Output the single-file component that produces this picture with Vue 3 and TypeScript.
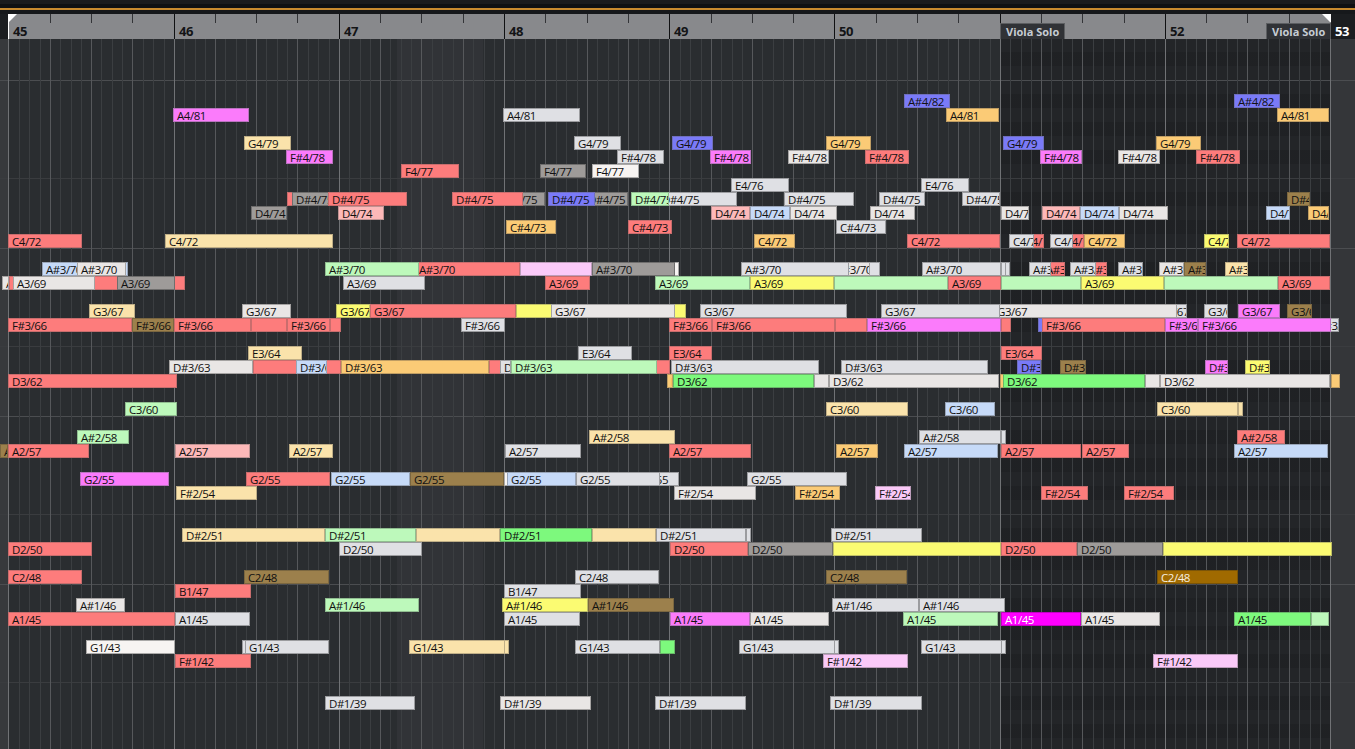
<script setup lang="ts">
type Spec = [number, number, string, number?]
type Row = [string, number, Spec[]]

const barStarts = [8, 174, 339, 504, 669, 834, 1000, 1165, 1330]
const beatStarts = [
  8, 50, 91, 132, 174, 215, 256, 297, 339, 380, 421, 463, 504, 545, 587, 628, 669, 711, 752, 793,
  834, 876, 917, 958, 1000, 1041, 1082, 1124, 1165, 1206, 1247, 1289, 1330,
]

const bars = barStarts.slice(0, -1).map((start, i) => {
  const beats = beatStarts.slice(i * 4, i * 4 + 5)
  return {
    num: 45 + i,
    width: barStarts[i + 1] - start,
    beats: beats.slice(0, 4).map((b, j) => beats[j + 1] - b),
    tagged: i === 6,
  }
})

const lines: { x: number; kind: string }[] = []
beatStarts.slice(0, -1).forEach((b, i) => {
  const next = beatStarts[i + 1]
  lines.push({ x: b, kind: i % 4 === 0 ? 'major' : 'beat' })
  for (let k = 1; k < 4; k++) lines.push({ x: Math.round(b + ((next - b) * k) / 4), kind: 'six' })
})
lines.push({ x: 1330, kind: 'major' })

const sharps = [1, 3, 6, 8, 10]
const pitchRows = Array.from({ length: 51 }, (_, i) => {
  const p = 86 - i
  const pc = p % 12
  return { p, sharp: sharps.includes(pc), line: pc === 11 ? 'octave' : pc === 4 ? 'fourth' : '' }
})

const data: Row[] = [
  ['A#4/82', 82, [[904, 950, 'u'], [1234, 1280, 'u']]],
  ['A4/81', 81, [[173, 249, 'm'], [503, 580, 'g'], [946, 999, 'o'], [1277, 1329, 'o']]],
  ['G4/79', 79, [[244, 291, 'c'], [574, 621, 'g'], [672, 713, 'u'], [826, 871, 'o'], [1003, 1044, 'u'], [1156, 1201, 'o']]],
  ['F#4/78', 78, [[286, 333, 'm'], [617, 664, 'g'], [710, 751, 'm'], [788, 829, 'w'], [865, 909, 'r'], [1040, 1082, 'm'], [1118, 1160, 'w'], [1196, 1240, 'r']]],
  ['F4/77', 77, [[401, 459, 'r'], [540, 586, 'd'], [592, 639, 'h']]],
  ['E4/76', 76, [[731, 789, 'g'], [921, 969, 'g']]],
  ['D#4/75', 75, [[287, 293, 'r', 0], [292, 329, 'd'], [328, 407, 'r'], [496, 545, 'd'], [452, 523, 'r'], [584, 628, 'd'], [548, 595, 'u'], [658, 737, 'g'], [631, 669, 'l'], [784, 854, 'g'], [879, 925, 'g'], [962, 1000, 'g'], [1287, 1310, 'b']]],
  ['D4/74', 74, [[251, 287, 'd'], [338, 384, 'q'], [711, 750, 'q'], [750, 790, 's'], [790, 837, 'w'], [870, 915, 'w'], [1001, 1029, 'w'], [1042, 1080, 'q'], [1080, 1119, 's'], [1119, 1168, 'w'], [1266, 1290, 's'], [1308, 1329, 'o']]],
  ['C#4/73', 73, [[506, 556, 'o'], [628, 672, 'r'], [836, 886, 'g']]],
  ['C4/72', 72, [[8, 82, 'r'], [165, 333, 'c'], [754, 795, 'o'], [907, 1000, 'r'], [1021, 1044, 'r'], [1009, 1034, 'g'], [1061, 1084, 'r'], [1050, 1073, 'g'], [1084, 1125, 'o'], [1204, 1229, 'y'], [1237, 1330, 'r']]],
  ['A#3/70', 70, [[42, 128, 's'], [77, 126, 'w'], [415, 520, 'r'], [325, 419, 'l'], [520, 592, 'p', 0], [592, 679, 'h', 0], [592, 675, 'd'], [860, 880, 'g', 0], [832, 870, 'w'], [741, 849, 'g'], [922, 1001, 'g'], [1001, 1006, 'g', 0], [1005, 1009, 'g', 0], [1042, 1065, 'r'], [1029, 1051, 'g'], [1085, 1107, 'r'], [1070, 1096, 'g'], [1118, 1143, 'g'], [1159, 1184, 'w'], [1184, 1206, 'b'], [1225, 1248, 'c']]],
  ['A3/69', 69, [[2, 9, 'w'], [9, 185, 'r', 0], [13, 95, 'w'], [117, 175, 'd'], [343, 425, 'g'], [545, 590, 'r'], [655, 750, 'l'], [750, 834, 'y'], [834, 948, 'l', 0], [948, 1001, 'r'], [1001, 1081, 'l', 0], [1081, 1164, 'y'], [1164, 1278, 'l', 0], [1278, 1330, 'r']]],
  ['G3/67', 67, [[89, 135, 'c'], [242, 291, 'w'], [336, 370, 'y'], [370, 516, 'r'], [516, 686, 'y', 0], [551, 675, 'w'], [700, 847, 'g'], [1155, 1187, 'g'], [993, 1177, 'w'], [881, 1000, 'g'], [1204, 1228, 'g'], [1238, 1280, 'm'], [1287, 1312, 'b']]],
  ['F#3/66', 66, [[8, 132, 'r'], [132, 174, 'b'], [174, 251, 'r'], [251, 287, 'r', 0], [287, 330, 'r'], [330, 341, 'r', 0], [461, 505, 'g'], [669, 712, 'r'], [712, 835, 'r'], [835, 867, 'r', 0], [867, 1001, 'm'], [1001, 1011, 'r', 0], [1038, 1042, 'u', 0], [1042, 1165, 'r'], [1315, 1339, 'g'], [1165, 1198, 'm'], [1198, 1331, 'm']]],
  ['E3/64', 64, [[248, 302, 'c'], [578, 632, 'g'], [669, 712, 'r'], [1001, 1042, 'r']]],
  ['D#3/63', 63, [[253, 341, 'r', 0], [169, 253, 'w'], [296, 327, 's'], [341, 489, 'o'], [489, 670, 'r', 0], [500, 511, 'g'], [511, 657, 'l'], [671, 819, 'g'], [841, 988, 'g'], [1017, 1041, 'u'], [1060, 1086, 'b'], [1205, 1228, 'm'], [1245, 1270, 'y']]],
  ['D3/62', 62, [[8, 177, 'r'], [667, 673, 'o'], [673, 814, 'n'], [814, 829, 'w', 0], [829, 999, 'w'], [1000, 1003, 'o', 0], [1003, 1145, 'n'], [1145, 1160, 'w', 0], [1160, 1330, 'w'], [1331, 1340, 'o', 0]]],
  ['C3/60', 60, [[125, 177, 'l'], [826, 908, 'c'], [945, 995, 's'], [1157, 1238, 'c'], [1238, 1242, 'c', 0]]],
  ['A#2/58', 58, [[77, 129, 'l'], [589, 675, 'c'], [919, 1001, 'g'], [1001, 1005, 'g', 0], [1237, 1285, 'r']]],
  ['A2/57', 57, [[0, 8, 'b'], [8, 89, 'r'], [175, 250, 'q'], [289, 333, 'c'], [505, 581, 'g'], [669, 751, 'r'], [836, 878, 'o'], [904, 998, 's'], [1001, 1081, 'r'], [1082, 1129, 'r'], [1234, 1328, 's']]],
  ['G2/55', 55, [[80, 169, 'm'], [246, 330, 'r'], [331, 410, 's'], [410, 504, 'b'], [504, 507, 'h', 0], [507, 576, 's'], [634, 679, 'g'], [576, 660, 'g'], [747, 847, 'g']]],
  ['F#2/54', 54, [[176, 257, 'c'], [674, 756, 'w'], [795, 840, 'o'], [875, 911, 'p'], [1041, 1088, 'r'], [1124, 1174, 'r']]],
  ['D#2/51', 51, [[182, 325, 'c'], [325, 416, 'l'], [416, 500, 'c', 0], [500, 592, 'n'], [592, 656, 'c', 0], [746, 750, 'g', 0], [656, 746, 'g'], [831, 922, 'g']]],
  ['D2/50', 50, [[8, 92, 'r'], [339, 422, 'g'], [670, 748, 'r'], [748, 833, 'd'], [833, 1001, 'y', 0], [1001, 1077, 'r'], [1077, 1163, 'd'], [1163, 1332, 'y', 0]]],
  ['C2/48', 48, [[8, 82, 'r'], [244, 329, 'b'], [575, 659, 'g'], [826, 907, 'b'], [1157, 1238, 'B']]],
  ['B1/47', 47, [[175, 251, 'r'], [504, 581, 'g']]],
  ['A#1/46', 46, [[76, 125, 'w'], [325, 419, 'l'], [502, 588, 'y'], [588, 674, 'b'], [832, 919, 'g'], [919, 1005, 'g']]],
  ['A1/45', 45, [[8, 175, 'r'], [175, 250, 'g'], [504, 580, 'g'], [670, 750, 'm'], [750, 829, 'w'], [903, 998, 'l'], [1001, 1081, 'M'], [1081, 1160, 'w'], [1234, 1311, 'n'], [1311, 1329, 'l', 0]]],
  ['G1/43', 43, [[86, 175, 'h'], [242, 246, 'g', 0], [245, 329, 'g'], [504, 507, 'c', 0], [409, 505, 'c'], [575, 660, 'g'], [660, 675, 'n', 0], [834, 838, 'g', 0], [739, 835, 'g'], [1001, 1005, 'g', 0], [921, 1002, 'g']]],
  ['F#1/42', 42, [[175, 251, 'r'], [823, 908, 'p'], [1153, 1238, 'p']]],
  ['D#1/39', 39, [[325, 415, 'g'], [500, 591, 'w'], [655, 746, 'g'], [830, 922, 'g']]],
]

const notes = data.flatMap(([label, pitch, specs]) =>
  specs.map(([x1, x2, color, show]) => ({
    label: show === 0 ? '' : label,
    color,
    style: {
      left: `${x1}px`,
      width: `${x2 - x1}px`,
      top: `${108 + (81 - pitch) * 14 - 39}px`,
    },
  })),
)
</script>

<template>
  <div class="app">
    <div class="top">
      <div class="top-a"></div>
      <div class="top-b"></div>
      <div class="top-line"></div>
      <div class="top-c"></div>
    </div>
    <div class="ruler">
      <div class="gutter"></div>
      <div v-for="bar in bars" :key="bar.num" class="bar" :style="{ width: bar.width + 'px' }">
        <div class="ticks">
          <div v-for="(w, i) in bar.beats" :key="i" class="tick" :style="{ width: w + 'px' }"></div>
        </div>
        <div class="num">{{ bar.num }}</div>
        <div v-if="bar.tagged" class="tag">Viola Solo</div>
      </div>
      <div class="end"><span class="end-num">53</span></div>
      <div class="tag tag-end">Viola Solo</div>
      <svg class="corner corner-l" width="9" height="9" viewBox="0 0 9 9"><polygon points="0,0 9,0 0,9" fill="#fff" /></svg>
      <svg class="corner corner-r" width="9" height="9" viewBox="0 0 9 9"><polygon points="0,0 9,0 9,9" fill="#fff" /></svg>
    </div>
    <div class="canvas">
      <div class="zones">
        <div class="zone zone-margin"></div>
        <div class="zone zone-a"></div>
        <div class="zone zone-light"></div>
        <div class="zone zone-b"></div>
        <div class="zone zone-dark"></div>
        <div class="zone zone-right"></div>
      </div>
      <div class="rows">
        <div
          v-for="row in pitchRows"
          :key="row.p"
          class="row"
          :class="[row.line, { sharp: row.sharp }]"
        ></div>
      </div>
      <div class="grid">
        <div
          v-for="line in lines"
          :key="line.x"
          class="vline"
          :class="line.kind"
          :style="{ left: line.x + 'px' }"
        ></div>
      </div>
      <div
        v-for="(note, i) in notes"
        :key="i"
        class="note"
        :class="'c-' + note.color"
        :style="note.style"
      >{{ note.label }}</div>
    </div>
  </div>
</template>

<style>
html,
body {
  margin: 0;
  background: #2a2d30;
  overflow: hidden;
}
</style>

<style scoped>
.app {
  width: 1355px;
  height: 749px;
  display: flex;
  flex-direction: column;
  overflow: hidden;
  font-family: "Open Sans", "Liberation Sans", sans-serif;
}
.top {
  height: 14px;
  flex: none;
  display: flex;
  flex-direction: column;
}
.top-a { height: 4px; background: #1a1b1d; }
.top-b { height: 4px; background: #0f1012; }
.top-line { height: 2px; background: #c88a2e; }
.top-c { height: 4px; background: #16181b; }

.ruler {
  height: 25px;
  flex: none;
  display: flex;
  position: relative;
  background: #88898c;
}
.gutter { width: 8px; flex: none; background: #1b1d20; }
.bar {
  flex: none;
  position: relative;
  border-left: 1px solid #101113;
  box-sizing: border-box;
}
.gutter + .bar { border-left-color: #fff; }
.ticks { display: flex; height: 9px; margin-left: -1px; }
.tick {
  flex: none;
  box-sizing: border-box;
  border-left: 1px solid #333437;
}
.tick:first-child { border-left-color: transparent; }
.num {
  margin: 0 0 0 4px;
  font-size: 13px;
  font-weight: 700;
  letter-spacing: -0.4px;
  line-height: 16px;
  color: #131416;
}
.end {
  flex: 1;
  background: #1b1d20;
  padding-left: 5px;
  font-size: 13px;
  font-weight: 700;
  letter-spacing: -0.4px;
  line-height: 16px;
  color: #fff;
}
.end-num { display: block; margin-top: 9px; }
.tag {
  position: absolute;
  left: -1px;
  top: 9px;
  width: 65px;
  height: 16px;
  box-sizing: border-box;
  background: #303236;
  border: 1px solid #5c5e61;
  border-bottom: 0;
  padding-left: 5px;
  font-size: 11px;
  font-weight: 700;
  line-height: 15px;
  color: #c6ccd3;
  white-space: nowrap;
  overflow: hidden;
}
.tag-end { left: 1266px; }
.corner { position: absolute; top: 0; }
.corner-l { left: 8px; }
.corner-r { left: 1322px; }

.canvas {
  flex: 1;
  position: relative;
  overflow: hidden;
}
.zones {
  position: absolute;
  inset: 0;
  display: flex;
}
.zone { height: 100%; flex: none; }
.zone-margin { width: 8px; background: #37393c; }
.zone-a { width: 389px; background: #2a2d30; }
.zone-light { width: 86px; background: #313337; }
.zone-b { width: 517px; background: #2a2d30; }
.zone-dark { width: 331px; background: #232528; }
.zone-right { flex: 1; background: #343639; }

.rows {
  position: absolute;
  left: 0;
  right: 0;
  top: -1px;
  display: flex;
  flex-direction: column;
}
.row {
  height: 14px;
  flex: none;
  box-sizing: border-box;
}
.row.sharp {
  background: linear-gradient(90deg, transparent 1000px, rgba(0, 0, 0, 0.1) 1000px, rgba(0, 0, 0, 0.1) 1331px, transparent 1331px);
}
.row.octave { border-top: 1px solid #4b4d50; }
.row.fourth { border-top: 1px solid #3a3c3f; }

.grid {
  position: absolute;
  inset: 0;
}
.vline {
  position: absolute;
  top: 0;
  bottom: 0;
  width: 1px;
}
.vline.major { background: #707275; }
.vline.beat { background: #56585b; }
.vline.six { background: #3b3e41; }

.note {
  position: absolute;
  height: 14px;
  box-sizing: border-box;
  border: 1px solid #999;
  padding-left: 3px;
  font-size: 11.5px;
  letter-spacing: -0.45px;
  line-height: 14px;
  color: #111;
  white-space: nowrap;
  overflow: hidden;
}
.c-r { background: #fd7c7c; border-color: #c96d6d; }
.c-m { background: #fb7bfb; border-color: #bb72bf; }
.c-c { background: #fae3ab; border-color: #bfae86; }
.c-g { background: #dfe0e4; border-color: #9b9c9f; }
.c-d { background: #9e9b99; border-color: #6f6e6d; }
.c-b { background: #9c804c; border-color: #7b6740; }
.c-l { background: #bdf9bb; border-color: #90bd90; }
.c-n { background: #7df97d; border-color: #68b868; }
.c-s { background: #c6daf8; border-color: #99a5b8; }
.c-u { background: #7a7af8; border-color: #6f6fbf; }
.c-o { background: #fbcb76; border-color: #bf9d63; }
.c-y { background: #fbfb72; border-color: #bfbf66; }
.c-p { background: #fac9f8; border-color: #bd9dbb; }
.c-q { background: #fdb8b8; border-color: #bf9393; }
.c-w { background: #e9e6e5; border-color: #a5a3a2; }
.c-h { background: #f7f4f2; border-color: #aaa9a8; }
.c-M { background: #ff00ff; border-color: #c400c4; color: #fff; }
.c-B { background: #a06a00; border-color: #7a5408; color: #f7efe0; }
</style>
